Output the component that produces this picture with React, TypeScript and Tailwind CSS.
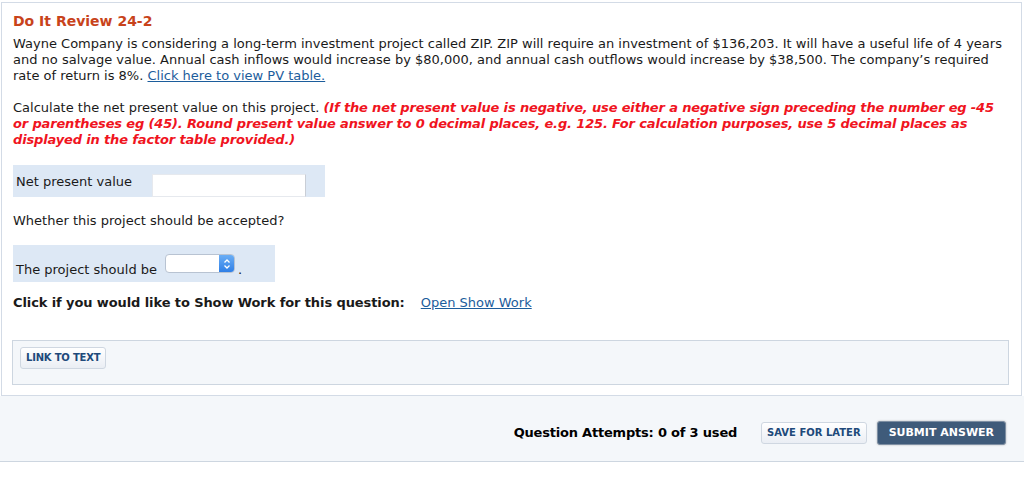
import React from "react";

export default function App() {
  return (
    <div className="w-[1024px] h-[500px] bg-white text-[13px] leading-[16px] text-[#1a1a1a]" style={{ fontFamily: '"DejaVu Sans", Verdana, sans-serif' }}>
      <div className="pt-[2px] pl-[1px] pr-[2px]">
        <div className="border border-[#d3dbe6] bg-white pl-[11px] pr-[12px] pt-[9px] pb-[10px]">
          <h2 className="text-[14px] font-bold text-[#c8431b] leading-[18px]">Do It Review 24-2</h2>
          <p className="mt-[6px]">
            Wayne Company is considering a long-term investment project called ZIP. ZIP will require an investment of $136,203. It will have a useful life of 4 years and no salvage value. Annual cash inflows would increase by $80,000, and annual cash outflows would increase by $38,500. The company’s required rate of return is 8%.{" "}
            <a href="#" className="text-[#1c5d9c] underline">Click here to view PV table.</a>
          </p>
          <p className="mt-[16px]">
            Calculate the net present value on this project.{" "}
            <span className="font-bold italic text-[#f0141e] tracking-[-0.15px]">
              (If the net present value is negative, use either a negative sign preceding the number eg -45 or parentheses eg (45). Round present value answer to 0 decimal places, e.g. 125. For calculation purposes, use 5 decimal places as displayed in the factor table provided.)
            </span>
          </p>

          <div className="mt-[17px] w-[312px] h-[32px] bg-[#dde8f5] flex items-start pl-[3px]">
            <span className="mt-[9px] w-[136px]">Net present value</span>
            <div className="mt-[9px] w-[154px] h-[23px] bg-white border border-[#e6e9ee] border-r-[#c9ced6]"></div>
          </div>

          <p className="mt-[16px]">Whether this project should be accepted?</p>

          <div className="mt-[16px] w-[262px] h-[37px] bg-[#dde8f5] flex items-end pl-[3px] pb-[3px]">
            <span className="mb-[1px]">The project should be</span>
            <div className="ml-[8px] mb-[6px] w-[70px] h-[19px] bg-white border border-[#b8c3d2] rounded-[4px] flex justify-end overflow-hidden">
              <div className="w-[15px] h-full bg-gradient-to-b from-[#6aaef5] to-[#2f7fe6] flex items-center justify-center">
                <svg width="8" height="12" viewBox="0 0 8 12" fill="none" stroke="white" strokeWidth="1.3">
                  <path d="M1.5 4.5 L4 2 L6.5 4.5" />
                  <path d="M1.5 7.5 L4 10 L6.5 7.5" />
                </svg>
              </div>
            </div>
            <span className="ml-[3px] mb-[1px]">.</span>
          </div>

          <div className="mt-[13px] flex items-center">
            <span className="font-bold tracking-[-0.1px]">Click if you would like to Show Work for this question:</span>
            <a href="#" className="ml-[16px] text-[#1c5d9c] underline">Open Show Work</a>
          </div>

          <div className="mt-[29px] -ml-[1px] border border-[#cdd6e0] bg-[#f4f7fa] h-[45px] pl-[7px] pt-[6px]">
            <button className="h-[22px] px-[5px] border border-[#cfd7e1] rounded-[3px] bg-gradient-to-b from-white to-[#eaeef4] text-[10px] font-bold text-[#20497a] leading-none tracking-[-0.2px]">
              LINK TO TEXT
            </button>
          </div>
        </div>
      </div>

      <div className="h-[66px] bg-[#f4f7fa] border-b border-[#cdd6e0] flex items-center justify-end pr-[18px]">
        <span className="font-bold text-[13px] text-black mt-[8px] tracking-[-0.2px]">Question Attempts: 0 of 3 used</span>
        <button className="ml-[24px] mt-[8px] h-[22px] px-[5px] border border-[#cfd7e1] rounded-[3px] bg-gradient-to-b from-white to-[#eaeef4] text-[10px] font-bold text-[#20497a] leading-none">
          SAVE FOR LATER
        </button>
        <button className="ml-[10px] mt-[8px] h-[24px] px-[11px] border border-[#7e8fa3] rounded-[3px] bg-[#3f5b7a] text-[11px] font-bold text-white leading-none shadow-[0_0_2px_rgba(0,0,0,0.3)]">
          SUBMIT ANSWER
        </button>
      </div>
    </div>
  );
}
